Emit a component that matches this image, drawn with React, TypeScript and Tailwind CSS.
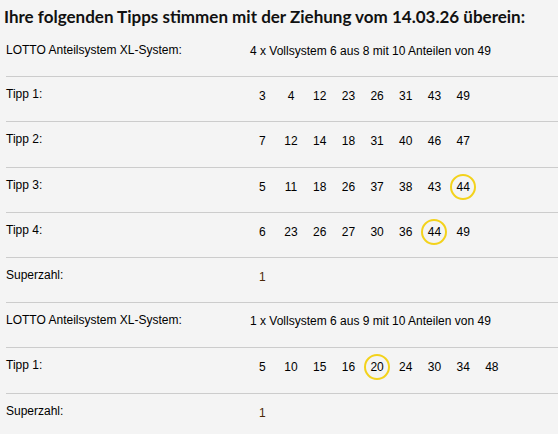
import React from "react";

type Row =
  | { kind: "system"; label: string; text: string }
  | { kind: "tipp"; label: string; numbers: number[]; hits: number[] }
  | { kind: "super"; label: string; value: string };

const rows: Row[] = [
  { kind: "system", label: "LOTTO Anteilsystem XL-System:", text: "4 x Vollsystem 6 aus 8 mit 10 Anteilen von 49" },
  { kind: "tipp", label: "Tipp 1:", numbers: [3, 4, 12, 23, 26, 31, 43, 49], hits: [] },
  { kind: "tipp", label: "Tipp 2:", numbers: [7, 12, 14, 18, 31, 40, 46, 47], hits: [] },
  { kind: "tipp", label: "Tipp 3:", numbers: [5, 11, 18, 26, 37, 38, 43, 44], hits: [44] },
  { kind: "tipp", label: "Tipp 4:", numbers: [6, 23, 26, 27, 30, 36, 44, 49], hits: [44] },
  { kind: "super", label: "Superzahl:", value: "1" },
  { kind: "system", label: "LOTTO Anteilsystem XL-System:", text: "1 x Vollsystem 6 aus 9 mit 10 Anteilen von 49" },
  { kind: "tipp", label: "Tipp 1:", numbers: [5, 10, 15, 16, 20, 24, 30, 34, 48], hits: [20] },
  { kind: "super", label: "Superzahl:", value: "1" },
];

function NumberCell({ n, hit }: { n: number; hit: boolean }) {
  return (
    <div className="w-[28.7px] h-[26px] flex items-center justify-center shrink-0">
      {hit ? (
        <span className="w-[26px] h-[26px] rounded-full border-2 border-[#f3d21c] flex items-center justify-center">
          {n}
        </span>
      ) : (
        <span>{n}</span>
      )}
    </div>
  );
}

export default function App() {
  return (
    <div className="w-[558px] h-[434px] overflow-hidden bg-[#f4f4f4] text-black">
      <h1 className="h-[31px] pl-[4px] pt-[6px] text-[17px] font-bold leading-[22px] font-['Lato',sans-serif] text-[#111]">
        Ihre folgenden Tipps stimmen mit der Ziehung vom 14.03.26 überein:
      </h1>

      <div className="ml-[6px] font-['Liberation_Sans',Arial,sans-serif] text-[12px]">
        {rows.map((row, i) => (
          <div
            key={i}
            className={`flex h-[45.2px] ${i > 0 ? "border-t border-[#cccccc] pt-[6px]" : "pt-[8px]"}`}
          >
            <div className="w-[242px] shrink-0 h-[26px] flex items-center -mt-[2px]">{row.label}</div>
            {row.kind === "system" && (
              <div className="h-[26px] flex items-center pl-[2px] -mt-[1px]">{row.text}</div>
            )}
            {row.kind === "tipp" && (
              <div className="flex">
                {row.numbers.map((n) => (
                  <NumberCell key={n} n={n} hit={row.hits.includes(n)} />
                ))}
              </div>
            )}
            {row.kind === "super" && (
              <div className="w-[28.7px] h-[26px] flex items-center justify-center text-[#4a2806]">
                {row.value}
              </div>
            )}
          </div>
        ))}
      </div>
    </div>
  );
}
